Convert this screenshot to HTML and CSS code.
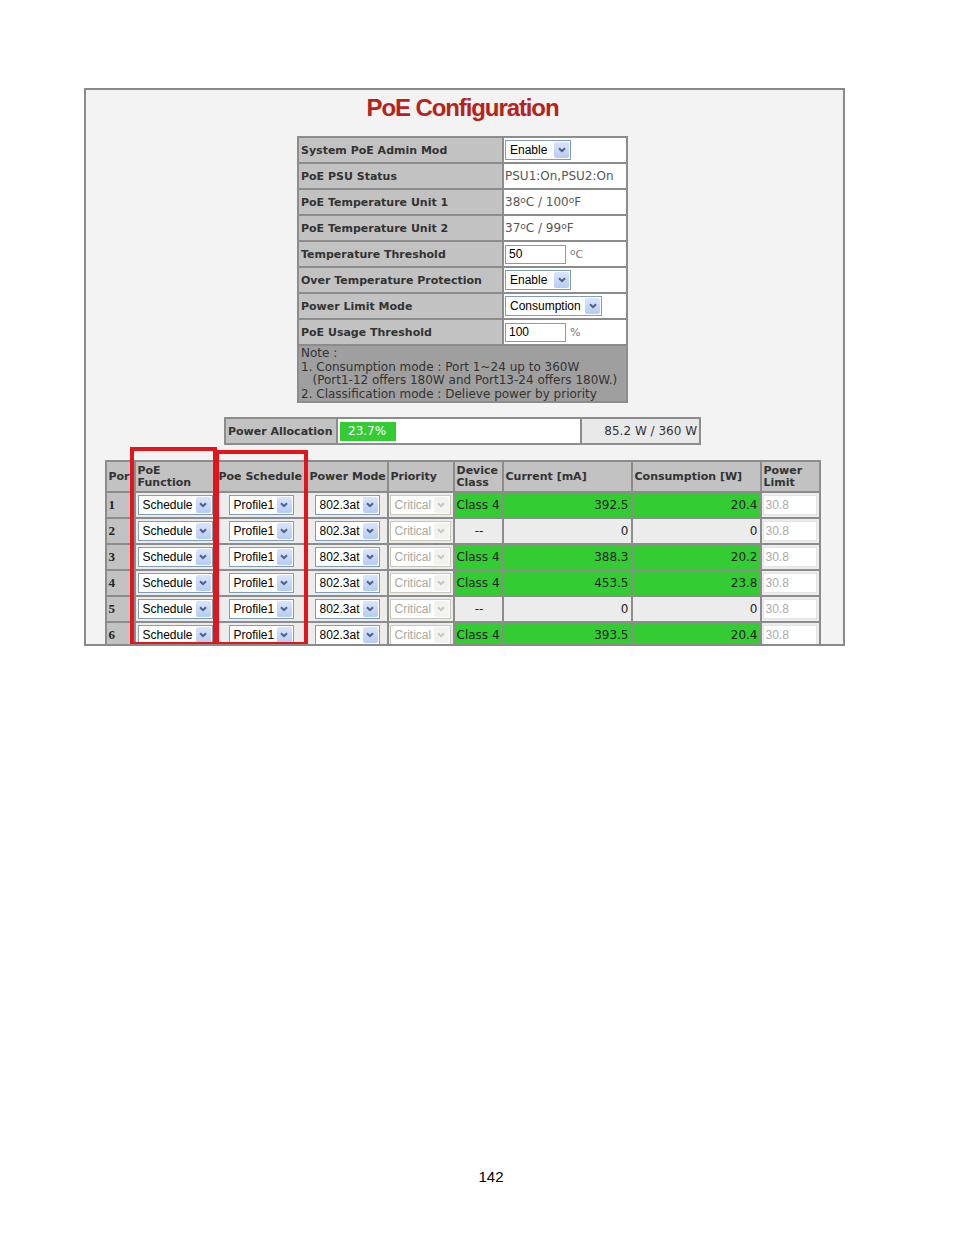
FILE: index.html
```html
<!DOCTYPE html>
<html>
<head>
    <title>PoE Configuration</title>
    <meta charset="utf-8">
    <link rel="stylesheet" href="styles.css">
</head>
<body>
    <div class="frame">
        <h1>PoE Configuration</h1>

        <table class="grid sys">
            <colgroup><col class="c-label"><col class="c-value"></colgroup>
            <tr><td class="lbl">System PoE Admin Mod</td><td class="val"><span class="sel w-enable"><span>Enable</span><span class="btn"><svg width="8" height="6" viewBox="0 0 8 6"><path d="M1 1.2 L4 4.2 L7 1.2" /></svg></span></span></td></tr>
            <tr><td class="lbl">PoE PSU Status</td><td class="val">PSU1:On,PSU2:On</td></tr>
            <tr><td class="lbl">PoE Temperature Unit 1</td><td class="val">38<span class="deg">o</span>C / 100<span class="deg">o</span>F</td></tr>
            <tr><td class="lbl">PoE Temperature Unit 2</td><td class="val">37<span class="deg">o</span>C / 99<span class="deg">o</span>F</td></tr>
            <tr><td class="lbl">Temperature Threshold</td><td class="val"><span class="inp">50</span><span class="unit"><span class="deg">o</span>C</span></td></tr>
            <tr><td class="lbl">Over Temperature Protection</td><td class="val"><span class="sel w-enable"><span>Enable</span><span class="btn"><svg width="8" height="6" viewBox="0 0 8 6"><path d="M1 1.2 L4 4.2 L7 1.2" /></svg></span></span></td></tr>
            <tr><td class="lbl">Power Limit Mode</td><td class="val"><span class="sel w-cons"><span>Consumption</span><span class="btn"><svg width="8" height="6" viewBox="0 0 8 6"><path d="M1 1.2 L4 4.2 L7 1.2" /></svg></span></span></td></tr>
            <tr><td class="lbl">PoE Usage Threshold</td><td class="val"><span class="inp">100</span><span class="unit">%</span></td></tr>
            <tr><td class="note" colspan="2">Note :<br>1. Consumption mode : Port 1~24 up to 360W<br>&nbsp;&nbsp; (Port1-12 offers 180W and Port13-24 offers 180W.)<br>2. Classification mode : Delieve power by priority</td></tr>
        </table>

        <table class="grid alloc">
            <colgroup><col class="a-label"><col class="a-bar"><col class="a-val"></colgroup>
            <tr>
                <td class="lbl">Power Allocation</td>
                <td class="bar-cell"><div class="bar" style="width:56px">23.7%</div></td>
                <td class="alloc-val">85.2 W / 360 W</td>
            </tr>
        </table>

        <div class="ports-wrap">
            <table class="grid ports">
                <colgroup>
                    <col style="width:27px"><col style="width:79px"><col style="width:89px"><col style="width:79px"><col style="width:64px"><col style="width:47px"><col style="width:127px"><col style="width:127px"><col style="width:57px">
                </colgroup>
                <tr class="head">
                    <td>Port</td><td>PoE<br>Function</td><td>Poe Schedule</td><td>Power Mode</td><td>Priority</td><td>Device<br>Class</td><td>Current [mA]</td><td>Consumption [W]</td><td>Power<br>Limit</td>
                </tr>
            </table>
            <div class="mark mark-func"></div>
            <div class="mark mark-sched"></div>
        </div>
    </div>

    <div class="page-no">142</div>

    <script>
    var rows = [
        ["1", "Class 4", "392.5", "20.4", true],
        ["2", "--", "0", "0", false],
        ["3", "Class 4", "388.3", "20.2", true],
        ["4", "Class 4", "453.5", "23.8", true],
        ["5", "--", "0", "0", false],
        ["6", "Class 4", "393.5", "20.4", true]
    ];
    var arrow = '<svg width="8" height="6" viewBox="0 0 8 6"><path d="M1 1.2 L4 4.2 L7 1.2" /></svg>';
    function sel(cls, text) {
        return '<span class="sel ' + cls + '"><span>' + text + '</span><span class="btn">' + arrow + '</span></span>';
    }
    var table = document.querySelector(".ports");
    rows.forEach(function (r) {
        var tr = document.createElement("tr");
        var on = r[4] ? " on" : "";
        tr.innerHTML =
            '<td class="port">' + r[0] + '</td>' +
            '<td class="ctr">' + sel("w-func", "Schedule") + '</td>' +
            '<td class="ctr">' + sel("w-prof", "Profile1") + '</td>' +
            '<td class="ctr">' + sel("w-mode", "802.3at") + '</td>' +
            '<td class="prio">' + sel("w-prio off", "Critical") + '</td>' +
            '<td class="cls' + on + (r[4] ? '' : ' ctr') + '">' + r[1] + '</td>' +
            '<td class="num' + on + '">' + r[2] + '</td>' +
            '<td class="num' + on + '">' + r[3] + '</td>' +
            '<td class="lim"><span class="lim-inp">30.8</span></td>';
        table.appendChild(tr);
    });
    </script>
</body>
</html>
```

FILE: styles.css
```css
body {
    margin: 0;
    padding: 0;
    background: #fff;
    font-family: "DejaVu Sans", Verdana, sans-serif;
}

.frame {
    margin: 88px 0 0 84px;
    width: 761px;
    height: 558px;
    box-sizing: border-box;
    border: 2px solid #8a8a8a;
    background: #f3f3f3;
    overflow: hidden;
    padding: 4px 4px 0 0;
}

h1 {
    margin: 0;
    text-align: center;
    font-family: "Liberation Sans", Arial, sans-serif;
    font-size: 24px;
    line-height: 28px;
    letter-spacing: -1.1px;
    color: #b5231c;
}

.grid {
    border-collapse: separate;
    border-spacing: 2px;
    background: #8c8c8c;
    margin: 0 auto;
    table-layout: fixed;
}

.grid td {
    padding: 0;
    height: 24px;
    vertical-align: middle;
    white-space: nowrap;
    overflow: hidden;
}

/* system settings */
.sys {
    margin-top: 14px;
    width: 331px;
}

.c-label { width: 203px; }
.c-value { width: 122px; }

.lbl {
    background: #c2c2c2;
    color: #333;
    font-weight: bold;
    font-size: 11px;
    padding-left: 2px !important;
}

.val {
    background: #fff;
    color: #555;
    font-size: 12px;
    padding-left: 1px !important;
}

.deg {
    font-size: 9px;
    vertical-align: 3px;
}

.note {
    background: #9f9f9f;
    color: #333;
    font-size: 12px;
    line-height: 13.5px;
    height: 54px !important;
    padding: 1px 0 0 2px !important;
    vertical-align: top !important;
}

.inp {
    display: inline-block;
    vertical-align: middle;
    width: 61px;
    height: 19px;
    box-sizing: border-box;
    border: 1px solid #7f9db9;
    background: #fff;
    color: #000;
    font-family: "Liberation Sans", Arial, sans-serif;
    font-size: 12px;
    line-height: 17px;
    padding-left: 3px;
}

.unit {
    font-size: 11px;
    color: #777;
    margin-left: 4px;
    vertical-align: middle;
}

/* fake select boxes */
.sel {
    display: inline-flex;
    align-items: center;
    justify-content: space-between;
    vertical-align: middle;
    height: 20px;
    box-sizing: border-box;
    border: 1px solid #7f9db9;
    background: #fff;
    color: #000;
    font-family: "Liberation Sans", Arial, sans-serif;
    font-size: 12px;
    padding-left: 4px;
}

.sel .btn {
    width: 15px;
    height: 16px;
    margin-right: 1px;
    border-radius: 2px;
    background: linear-gradient(#d9e5fd, #b7cbf4);
    display: flex;
    align-items: center;
    justify-content: center;
}

.sel .btn path {
    fill: none;
    stroke: #4d6185;
    stroke-width: 2;
}

.sel.off {
    border-color: #c9c7ba;
    color: #aca899;
}

.sel.off .btn {
    background: #f2f2ee;
}

.sel.off .btn path {
    stroke: #c9c7ba;
}

.w-enable { width: 66px; }
.w-cons { width: 97px; }
.w-func { width: 75px; }
.w-prof { width: 65px; }
.w-mode { width: 65px; }
.w-prio { width: 61px; }

/* power allocation */
.alloc {
    margin-top: 14px;
    width: 477px;
}

.a-label { width: 110px; }
.a-bar { width: 242px; }
.a-val { width: 117px; }

.bar-cell {
    background: #fff;
    padding-left: 2px !important;
}

.bar {
    height: 19px;
    background: #33cc33;
    color: #fff;
    font-size: 12px;
    line-height: 19px;
    padding-left: 8px;
    box-sizing: border-box;
}

.alloc-val {
    background: #e9e9e9;
    color: #333;
    font-size: 12px;
    text-align: right;
    padding-right: 2px !important;
}

/* port table */
.ports-wrap {
    position: relative;
    width: 716px;
    margin: 15px auto 0;
}

.ports {
    width: 716px;
}

.ports .head td {
    height: 28px;
    background: #c2c2c2;
    color: #333;
    font-weight: bold;
    font-size: 11px;
    line-height: 12px;
    padding: 1px 0 0 2px;
}

.ports td {
    background: #ececec;
    color: #222;
    font-size: 12px;
}

.ports td.port {
    background: #c2c2c2;
    font-family: "Liberation Serif", "Times New Roman", serif;
    font-weight: bold;
    font-size: 13px;
    padding-left: 2px;
}

.ports td.ctr {
    text-align: center;
}

.ports td.prio {
    padding-left: 1px;
}

.ports td.cls {
    padding-left: 2px;
}

.ports td.num {
    text-align: right;
    padding-right: 2px;
}

.ports td.on {
    background: #33cc33;
}

.ports td.lim {
    padding-left: 1px;
}

.lim-inp {
    display: block;
    width: 54px;
    height: 20px;
    background: #fff;
    border: 1px solid #e4e4e4;
    box-sizing: border-box;
    color: #aaa;
    font-family: "Liberation Sans", Arial, sans-serif;
    font-size: 12px;
    line-height: 18px;
    padding-left: 2px;
}

/* red highlight boxes */
.mark {
    position: absolute;
    border: 4px solid #e2141c;
    box-sizing: border-box;
}

.mark-func {
    left: 25px;
    top: -13px;
    width: 87px;
    height: 199px;
}

.mark-sched {
    left: 110px;
    top: -10px;
    width: 93px;
    height: 196px;
}

.page-no {
    margin-top: 522px;
    padding-left: 28px;
    text-align: center;
    font-family: "Liberation Sans", Arial, sans-serif;
    font-size: 15px;
    line-height: 18px;
    color: #000;
}
```
